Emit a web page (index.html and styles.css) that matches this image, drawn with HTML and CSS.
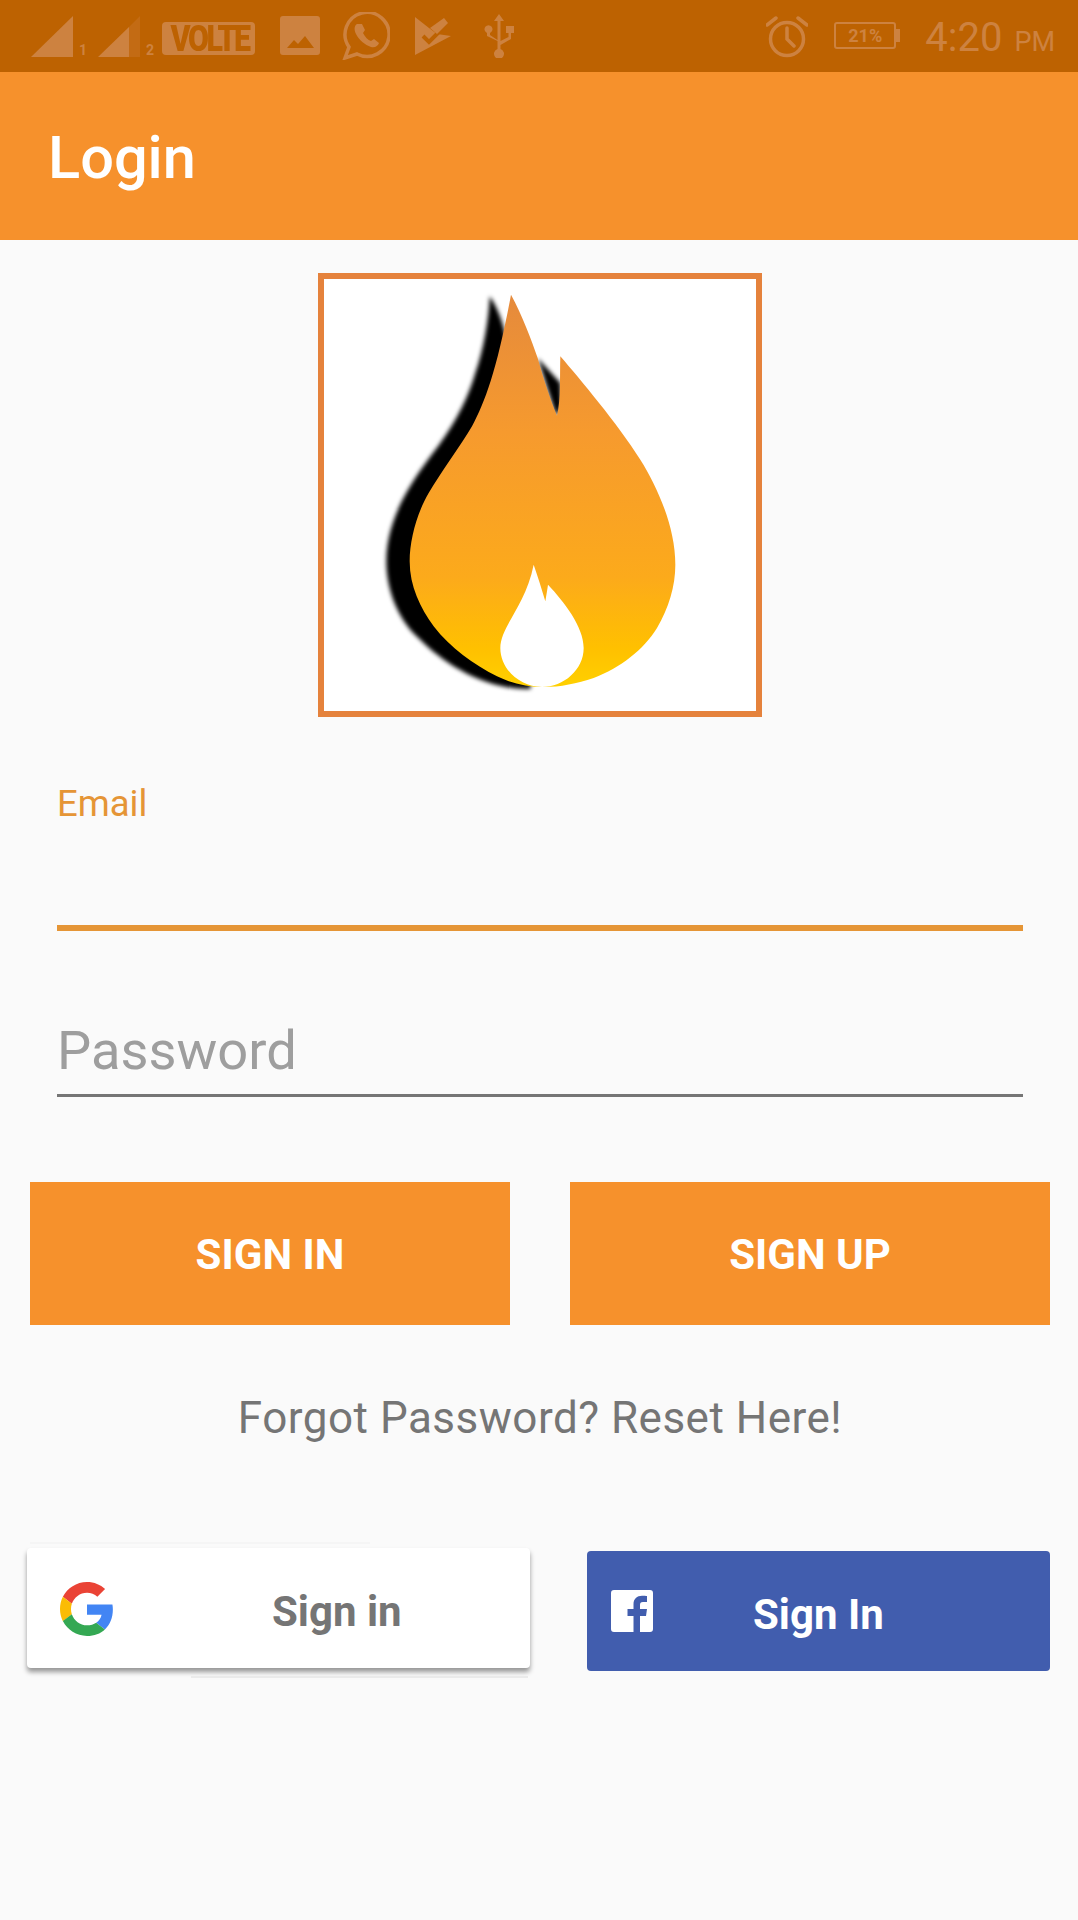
FILE: index.html
```html
<!DOCTYPE html>
<html lang="en">
<head>
<meta charset="utf-8">
<title>Login</title>
<link rel="stylesheet" href="styles.css">
</head>
<body>
<div class="page">
  <header class="status">
    <div class="status-left">
      <svg class="ic sig" viewBox="0 0 42 41"><path d="M0 41 42 0v41z"/></svg>
      <span class="sim sim1">1</span>
      <svg class="ic sig" viewBox="0 0 42 41"><path d="M0 41 31 11v30z"/><path class="dim" d="M31 11 42 0v41H31z"/></svg>
      <span class="sim sim2">2</span>
      <span class="volte"><span class="volte-text">VOLTE</span></span>
      <svg class="ic pic" viewBox="0 0 40 39"><path fill-rule="evenodd" d="M3 0h34a3 3 0 0 1 3 3v33a3 3 0 0 1-3 3H3a3 3 0 0 1-3-3V3a3 3 0 0 1 3-3zM7 32h27l-9-12-7 8-4-4z"/></svg>
      <svg class="ic wa" viewBox="0 0 48 48"><path class="line" d="M3 46l4-11A22 22 0 1 1 15 42z"/><path d="M15 12c-3 2-3 6-1 10 3 6 9 11 15 13 4 1 7-1 8-4l-5-4-3 2c-3-1-6-4-8-8l2-3-3-6z"/></svg>
      <svg class="ic play" viewBox="0 0 36 38"><path d="M0 0l14 11 8 6 14 2L0 38z"/><path class="cut" d="M8 19l6 6 16-16"/><path d="M15 11 29 1l4 5-11 11z"/></svg>
      <svg class="ic usb" viewBox="0 0 30 44"><path d="M15 0 20 7h-3.500v20l8-4v-4h-2.500v-7h8v7h-3v6l-10.500 6v4a5 5 0 1 1-3 0v-8L3 22v-3a4 4 0 1 1 3 0v2l7.500 5V7H10z"/></svg>
    </div>
    <div class="status-right">
      <svg class="ic alarm" viewBox="0 0 42 43"><circle class="line" cx="21" cy="24" r="16.5"/><path class="line thin" d="M21 13v11l7 7M1 10 10 3M41 10 32 3"/></svg>
      <div class="battery"><span class="batt-box">21%</span><span class="batt-tip"></span></div>
      <div class="clock">4:20<span class="ampm">PM</span></div>
    </div>
  </header>

  <div class="appbar"><h1 class="title">Login</h1></div>

  <main class="content">
    <div class="logo">
      <svg class="flame" viewBox="71 58 1296 1296">
        <defs>
          <linearGradient id="fire" x1="0" y1="0" x2="0" y2="1">
            <stop offset="0" stop-color="#e58a3c"/>
            <stop offset=".35" stop-color="#f69a2e"/>
            <stop offset=".72" stop-color="#fcaa1b"/>
            <stop offset=".9" stop-color="#ffc000"/>
            <stop offset="1" stop-color="#ffd000"/>
          </linearGradient>
          <filter id="soft" x="-10%" y="-10%" width="120%" height="120%"><feGaussianBlur stdDeviation="6"/></filter>
        </defs>
        <g filter="url(#soft)">
          <path d="M568 110C565 180 550 270 525 340 505 410 470 480 420 550 370 620 258 750 258 905 258 1000 300 1090 360 1140 430 1210 550 1290 690 1288L700 1200 620 250C610 190 590 140 568 110Z"/>
          <path d="M712 295 780 370 784 440 768 472Z"/>
        </g>
        <path fill="url(#fire)" d="M632 105C665 165 695 245 712 295 730 360 750 420 770 468 782 420 778 350 780 290 840 360 950 490 1020 600 1070 680 1125 800 1125 915 1125 980 1105 1045 1070 1105 1030 1170 960 1225 880 1255 830 1272 780 1282 730 1282 680 1282 630 1270 590 1250 520 1215 450 1165 400 1100 360 1045 328 980 328 905 328 840 350 760 385 700 420 640 480 560 515 500 555 425 590 330 632 105Z"/>
        <path fill="#fff" d="M700 915C712 950 725 990 735 1025 738 1005 741 990 743 975 790 1025 850 1100 850 1165 850 1230 790 1282 725 1282 660 1282 600 1230 600 1165 600 1100 675 1040 700 915Z"/>
      </svg>
    </div>

    <form class="form">
      <label class="field field-email">
        <span class="float-label">Email</span>
      </label>
      <label class="field field-pass">
        <span class="placeholder">Password</span>
      </label>
    </form>

    <div class="actions">
      <button type="button" class="btn">SIGN IN</button>
      <button type="button" class="btn">SIGN UP</button>
    </div>

    <p class="forgot">Forgot Password? Reset Here!</p>

    <div class="social">
      <button type="button" class="google">
        <svg class="g-mark" viewBox="0 0 48 48">
          <path fill="#EA4335" d="M24 9.5c3.54 0 6.71 1.22 9.21 3.6l6.85-6.85C35.9 2.38 30.47 0 24 0 14.62 0 6.51 5.38 2.56 13.22l7.98 6.19C12.43 13.72 17.74 9.5 24 9.5z"/>
          <path fill="#4285F4" d="M46.98 24.55c0-1.57-.15-3.09-.38-4.55H24v9.02h12.94c-.58 2.96-2.26 5.48-4.78 7.18l7.73 6c4.51-4.18 7.09-10.36 7.09-17.65z"/>
          <path fill="#FBBC05" d="M10.53 28.59c-.48-1.45-.76-2.99-.76-4.59s.27-3.14.76-4.59l-7.98-6.19C.92 16.46 0 20.12 0 24c0 3.88.92 7.54 2.56 10.78l7.97-6.19z"/>
          <path fill="#34A853" d="M24 48c6.48 0 11.93-2.13 15.89-5.81l-7.73-6c-2.15 1.45-4.92 2.3-8.16 2.3-6.26 0-11.57-4.22-13.47-9.91l-7.98 6.19C6.51 42.62 14.62 48 24 48z"/>
        </svg>
        <span class="google-text">Sign in</span>
      </button>
      <button type="button" class="facebook">
        <svg class="f-mark" viewBox="0 0 42 42"><path fill="#fff" fill-rule="evenodd" d="M3 0h36a3 3 0 0 1 3 3v36a3 3 0 0 1-3 3H29V26h6l1-7h-7v-4c0-2 .6-3 3-3h4V6c-1-.2-3-.3-5-.3-5 0-8.500 3-8.500 8.500V19h-6v7h6v16H3a3 3 0 0 1-3-3V3a3 3 0 0 1 3-3z"/></svg>
        <span class="fb-text">Sign In</span>
      </button>
    </div>
  </main>
</div>
</body>
</html>
```

FILE: styles.css
```css
* { box-sizing: border-box; }
html, body { margin: 0; padding: 0; }
body { font-family: Roboto, "Liberation Sans", sans-serif; background: #fafafa; }
.page { width: 1078px; height: 1920px; display: flex; flex-direction: column; background: #fafafa; overflow: hidden; }

.status { height: 72px; flex: none; background: #bd6201; display: flex; justify-content: space-between; align-items: flex-start; padding: 0 23px 0 31px; color: #cd8240; }
.status-left, .status-right { display: flex; align-items: flex-start; height: 72px; }
.ic { display: block; flex: none; fill: #cd8240; }
.ic .dim { fill: #c6722199; }
.ic .cut { fill: none; stroke: #bd6201; stroke-width: 4; }
.ic .line { fill: none; stroke: #cd8240; stroke-width: 3.5; }
.ic .thin { stroke-linecap: round; }
.sig { width: 42px; height: 41px; margin-top: 16px; }
.sim { font-size: 14px; font-weight: 700; line-height: 14px; margin-top: 43px; width: 25px; padding-left: 6px; }
.sim2 { width: 22px; }
.volte { display: block; width: 93px; height: 33px; margin-top: 22px; background: #cd8240; color: #bd6201; border-radius: 4px; text-align: center; }
.volte-text { display: inline-block; font-size: 37px; font-weight: 900; line-height: 33px; letter-spacing: -3px; transform: scaleX(.82); white-space: nowrap; }
.pic { width: 40px; height: 39px; margin: 16px 0 0 25px; }
.wa { width: 48px; height: 48px; margin: 12px 0 0 22px; }
.play { width: 36px; height: 38px; margin: 17px 0 0 25px; }
.usb { width: 30px; height: 44px; margin: 14px 0 0 33px; }
.alarm { width: 42px; height: 43px; margin-top: 15px; }
.battery { display: flex; align-items: center; margin: 22px 0 0 26px; height: 27px; }
.batt-box { width: 62px; height: 27px; border: 2px solid #cd8240; border-radius: 3px; font-size: 18px; font-weight: 700; line-height: 23px; text-align: center; }
.batt-tip { width: 4px; height: 13px; background: #cd8240; }
.clock { font-size: 40px; line-height: 40px; margin: 18px 0 0 25px; white-space: nowrap; }
.ampm { font-size: 27px; margin-left: 12px; }

.appbar { height: 168px; flex: none; background: #f6912c; display: flex; align-items: center; padding: 5px 0 0 48px; }
.title { margin: 0; color: #fff; font-size: 59.5px; font-weight: 500; line-height: 1; }

.content { flex: 1; display: flex; flex-direction: column; }
.logo { width: 444px; height: 444px; margin: 33px 0 0 318px; border: 6px solid #e5823c; background: #fff; }
.flame { display: block; width: 100%; height: 100%; }

.form { margin: 0 55px 0 57px; display: flex; flex-direction: column; }
.field { display: block; }
.field-email { height: 214px; border-bottom: 6px solid #e59536; padding-top: 65px; }
.float-label { display: block; font-size: 36.5px; line-height: 44px; color: #e59536; }
.field-pass { height: 166px; border-bottom: 3px solid #757575; padding-top: 90px; }
.placeholder { display: block; font-size: 54.3px; line-height: 60px; color: #9e9e9e; }

.actions { display: flex; justify-content: space-between; padding: 0 28px 0 30px; margin-top: 85px; }
.btn { width: 480px; height: 143px; background: #f6912c; border: 0; padding: 2px 0 0; color: #fff; font-family: inherit; font-size: 42px; font-weight: 700; }

.forgot { margin: 67px 0 0; padding-left: 2px; text-align: center; font-size: 44px; line-height: 52px; color: #757575; letter-spacing: .5px; }

.social { display: flex; justify-content: space-between; align-items: flex-start; padding: 0 28px 0 27px; margin-top: 104px; }
.google, .facebook { position: relative; display: flex; align-items: center; border: 0; padding: 0; font-family: inherit; font-size: 42px; font-weight: 700; height: 120px; }
.google { width: 503px; background: #fff; border-radius: 4px; color: #757575; box-shadow: 0 4px 5px rgba(0,0,0,.4); }
.google::before { content: ""; position: absolute; left: 3px; width: 340px; top: -6px; height: 2px; background: #f5f5f5; }
.google::after { content: ""; position: absolute; left: 164px; right: 2px; bottom: -10px; height: 2px; background: #ebebeb; }
.g-mark { width: 54px; height: 54px; margin: 2px 0 0 33px; flex: none; }
.google-text { margin-left: 158px; margin-top: 7px; }
.facebook { width: 463px; margin-top: 3px; background: #415dae; border-radius: 4px; color: #fff; }
.f-mark { width: 42px; height: 42px; margin: 0 0 0 24px; flex: none; }
.fb-text { margin-left: 100px; margin-top: 6px; }
```
